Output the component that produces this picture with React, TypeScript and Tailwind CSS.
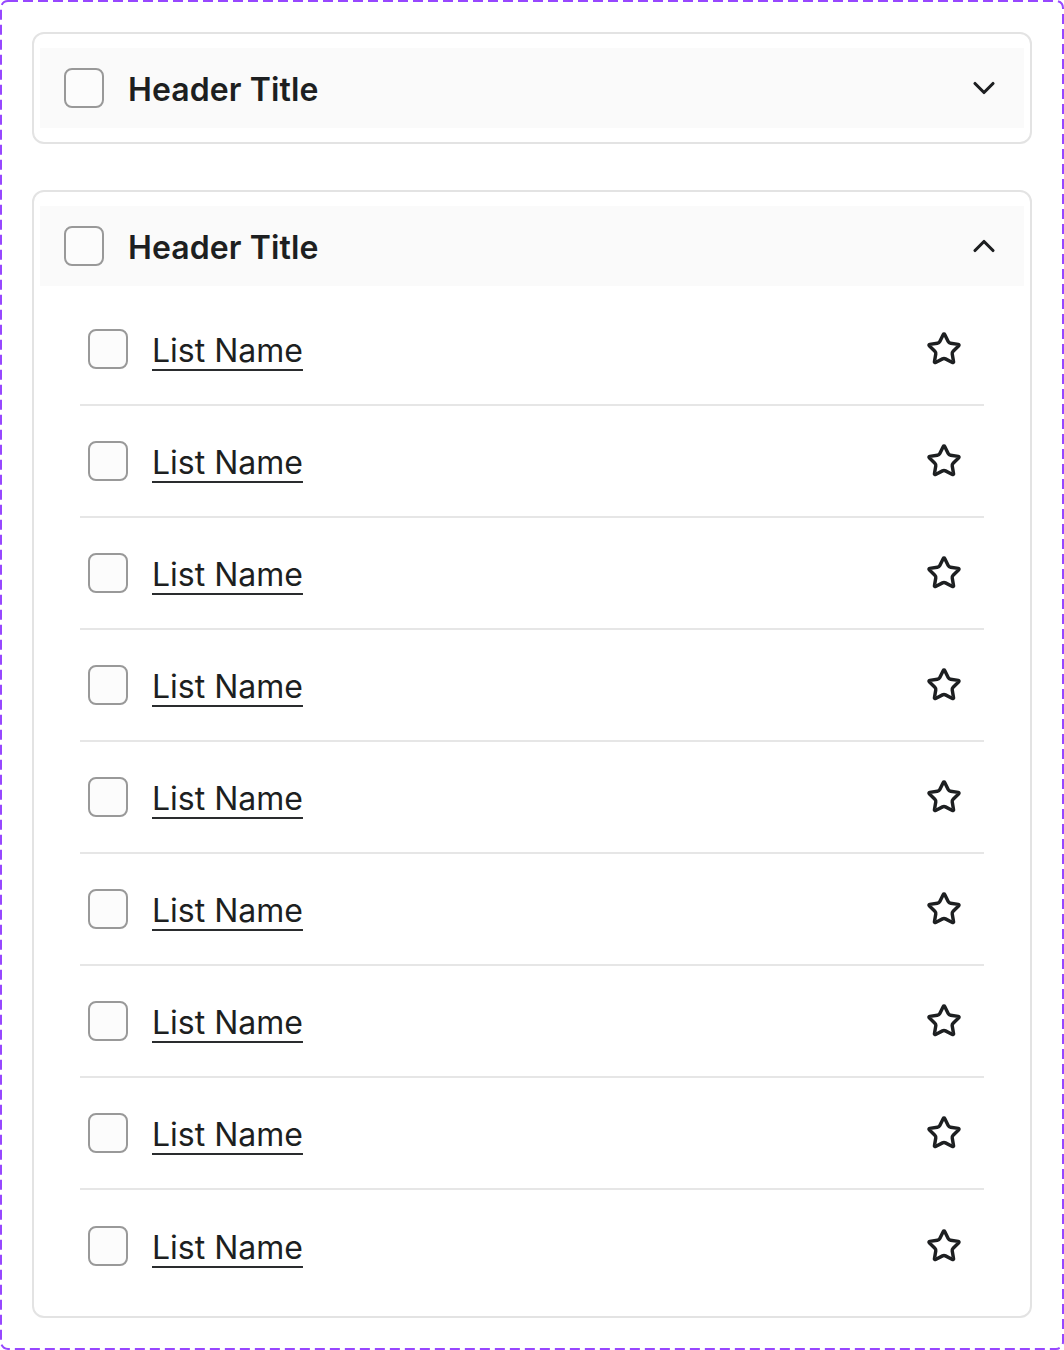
import { ChevronDown, ChevronUp, Star } from 'lucide-react';

const items = Array.from({ length: 9 }, (_, i) => ({ id: i, name: 'List Name' }));

function Checkbox() {
  return (
    <span className="block w-10 h-10 shrink-0 rounded-lg border-2 border-[#999999] bg-[#fcfcfc]" />
  );
}

function Header({ open }: { open: boolean }) {
  return (
    <div className="flex items-center h-20 bg-[#fafafa] pl-6 pr-[22px]">
      <Checkbox />
      <span className="ml-6 pt-1 text-[32px] font-semibold text-[#1d1f21] tracking-[0.1px]">
        Header Title
      </span>
      <span className="ml-auto text-[#1d1f21]">
        {open ? <ChevronUp size={36} strokeWidth={2.1} /> : <ChevronDown size={36} strokeWidth={2.1} />}
      </span>
    </div>
  );
}

export default function App() {
  return (
    <div
      className="relative w-[1064px] h-[1350px] bg-white p-8 flex flex-col gap-[46px]"
      style={{ fontFamily: 'Inter, "Noto Sans", sans-serif' }}
    >
      {/* dashed component frame */}
      <svg className="absolute inset-0 pointer-events-none" width="1064" height="1350">
        <rect
          x="1"
          y="1"
          width="1062"
          height="1348"
          rx="7"
          fill="none"
          stroke="#9747ff"
          strokeWidth="2"
          strokeDasharray="10 5"
        />
      </svg>

      <div className="rounded-xl border-2 border-[#e3e3e3] px-[6px] py-[14px]">
        <Header open={false} />
      </div>

      <div className="rounded-xl border-2 border-[#e3e3e3] px-[6px] pt-[14px] pb-[14px]">
        <Header open={true} />
        <ul className="px-10 pt-2">
          {items.map((item) => (
            <li
              key={item.id}
              className="flex items-center h-28 pl-2 pr-[22px] border-b-2 border-[#e6e6e6] last:border-b-0"
            >
              <Checkbox />
              <a
                href="#"
                className="ml-6 pt-1 text-[32px] text-[#1d1f21] underline decoration-2 underline-offset-[7px] decoration-[#2a2c2e]"
              >
                {item.name}
              </a>
              <span className="ml-auto text-[#1d1f21]">
                <Star size={36} strokeWidth={2.3} />
              </span>
            </li>
          ))}
        </ul>
      </div>
    </div>
  );
}
